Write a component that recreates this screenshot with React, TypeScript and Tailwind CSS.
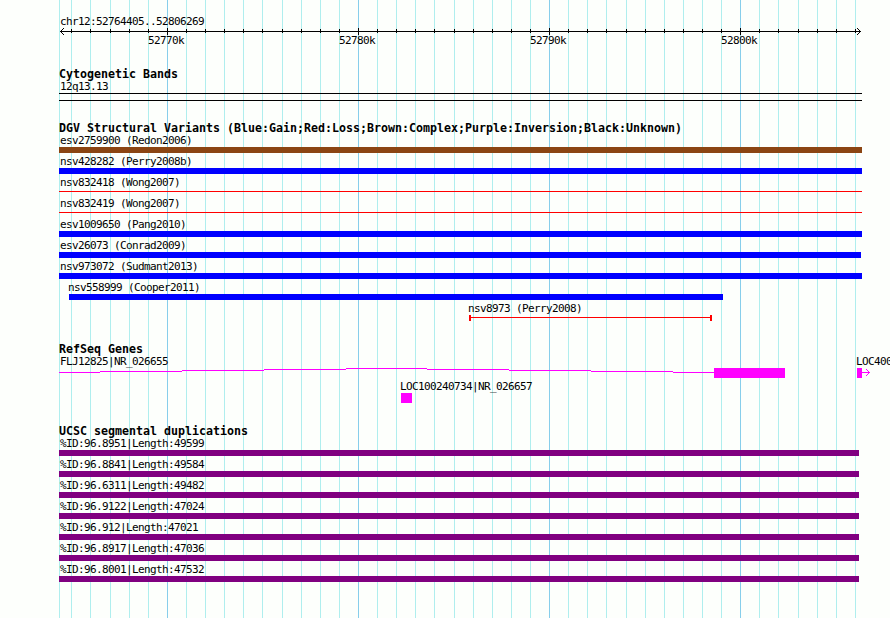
import type React from "react"

const GRID_LINES = [
  59, 71, 90, 110, 129, 148, 186, 205, 224, 243, 262, 282, 301, 320, 339, 377, 396, 415, 434, 454, 473, 492, 511, 530,
  568, 587, 606, 626, 645, 664, 683, 702, 721, 759, 778, 798, 817, 836, 855,
]
const MAJOR_LINES = [167, 358, 549, 740]

const variants = [
  { label: "esv2759900 (Redon2006)", start: 59, end: 862, color: "bg-[#8b4513]" },
  { label: "nsv428282 (Perry2008b)", start: 59, end: 862, color: "bg-[#0000ff]" },
  { label: "nsv832418 (Wong2007)", start: 59, end: 862, color: "bg-[#ff0000]", thin: true },
  { label: "nsv832419 (Wong2007)", start: 59, end: 862, color: "bg-[#ff0000]", thin: true },
  { label: "esv1009650 (Pang2010)", start: 59, end: 862, color: "bg-[#0000ff]" },
  { label: "esv26073 (Conrad2009)", start: 59, end: 861, color: "bg-[#0000ff]" },
  { label: "nsv973072 (Sudmant2013)", start: 59, end: 862, color: "bg-[#0000ff]" },
  { label: "nsv558999 (Cooper2011)", start: 69, end: 723, color: "bg-[#0000ff]" },
  { label: "nsv8973 (Perry2008)", start: 469, end: 712, color: "bg-[#ff0000]", thin: true, capped: true },
]

const duplications = [
  "%ID:96.8951|Length:49599",
  "%ID:96.8841|Length:49584",
  "%ID:96.6311|Length:49482",
  "%ID:96.9122|Length:47024",
  "%ID:96.912|Length:47021",
  "%ID:96.8917|Length:47036",
  "%ID:96.8001|Length:47532",
]

export default function App() {
  return (
    <div className="relative h-[618px] w-[890px] overflow-hidden bg-[#fdfffc] font-['DejaVu_Sans_Mono','Liberation_Mono',monospace] text-[11px] text-black">
      <Grid />
      <div className="relative flex flex-col pt-4">
        <Ruler />

        <Track title="Cytogenetic Bands" className="mt-[21px]">
          <Label x={60}>12q13.13</Label>
          <div className="ml-[59px] h-2 w-[803px] border-y border-black" />
        </Track>

        <Track title="DGV Structural Variants (Blue:Gain;Red:Loss;Brown:Complex;Purple:Inversion;Black:Unknown)" className="mt-[21px]">
          {variants.map((v) => (
            <Feature key={v.label} {...v} />
          ))}
        </Track>

        <Track title="RefSeq Genes" className="mt-[19px]">
          <div className="flex">
            <Label x={60}>FLJ12825|NR_026655</Label>
            <div className="ml-auto w-[34px]">
              <Label x={0}>LOC400</Label>
            </div>
          </div>
          <GeneModels />
          <Label x={400}>LOC100240734|NR_026657</Label>
          <div className="ml-[401px] h-2.5 w-[11px] bg-[#ff00ff]" />
        </Track>

        <Track title="UCSC segmental duplications" className="mt-[22px]">
          {duplications.map((label) => (
            <Feature key={label} label={label} start={59} end={859} color="bg-[#800080]" />
          ))}
        </Track>
      </div>
    </div>
  )
}

function Grid() {
  return (
    <svg className="absolute inset-0" width="890" height="618" shapeRendering="crispEdges">
      {GRID_LINES.map((x) => (
        <rect key={x} x={x} y="0" width="1" height="618" fill="#afeeee" />
      ))}
      {MAJOR_LINES.map((x) => (
        <rect key={x} x={x} y="0" width="1" height="618" fill="#87ceeb" />
      ))}
    </svg>
  )
}

function Ruler() {
  return (
    <div className="h-[31px]">
      <Label x={60}>chr12:52764405..52806269</Label>
      <svg className="block" width="890" height="7" shapeRendering="crispEdges">
        <rect x="60" y="3" width="801" height="1" />
        {GRID_LINES.slice(1).map((x) => (
          <rect key={x} x={x} y="1" width="1" height="4" />
        ))}
        {MAJOR_LINES.map((x) => (
          <rect key={x} x={x} y="0" width="1" height="7" />
        ))}
        <path d="M61 2h1v1h-1zM62 1h1v1h-1zM63 0h1v1h-1zM61 4h1v1h-1zM62 5h1v1h-1zM63 6h1v1h-1z" />
        <path d="M859 2h1v1h-1zM858 1h1v1h-1zM857 0h1v1h-1zM859 4h1v1h-1zM858 5h1v1h-1zM857 6h1v1h-1z" />
      </svg>
      <div className="ml-[148px] flex">
        {["52770k", "52780k", "52790k", "52800k"].map((tick) => (
          <div key={tick} className="w-[191px] shrink-0 last:w-10">
            <Label x={0}>{tick}</Label>
          </div>
        ))}
      </div>
    </div>
  )
}

function GeneModels() {
  return (
    <svg className="mb-[3px] block" width="890" height="10" fill="#ff00ff" shapeRendering="crispEdges">
      <path d="M59 4h41v1H59zM100 3h82v1h-82zM182 2h82v1h-82zM264 1h82v1h-82zM346 0h81v1h-81z" />
      <path d="M427 1h82v1h-82zM509 2h82v1h-82zM591 3h82v1h-82zM673 4h41v1h-41z" />
      <rect x="714" y="0" width="71" height="10" />
      <rect x="857" y="0" width="5" height="10" />
      <path d="M862 4h8v1h-8zM868 3h1v1h-1zM867 2h1v1h-1zM866 1h1v1h-1zM868 5h1v1h-1zM867 6h1v1h-1zM866 7h1v1h-1z" />
    </svg>
  )
}

interface TrackProps {
  title: string
  className: string
  children: React.ReactNode
}

function Track({ title, className, children }: TrackProps) {
  return (
    <section className={className}>
      <h2 className="ml-[59px] h-[13px] text-[11.63px] leading-[13px] font-bold whitespace-pre">{title}</h2>
      {children}
    </section>
  )
}

function Label({ x, children }: { x: number; children: React.ReactNode }) {
  return (
    <div className="h-3 leading-3 tracking-[-0.622px] whitespace-pre" style={{ marginLeft: x }}>
      {children}
    </div>
  )
}

interface FeatureProps {
  label: string
  start: number
  end: number
  color: string
  thin?: boolean
  capped?: boolean
}

function Feature({ label, start, end, color, thin, capped }: FeatureProps) {
  return (
    <div className="h-[21px]">
      <Label x={start === 59 ? 60 : start - 1}>{label}</Label>
      <div className="flex h-1.5" style={{ marginLeft: start, width: end - start }}>
        {capped && <div className={`w-0.5 ${color}`} />}
        <div className={`flex-1 ${thin ? "mt-0.5 h-px" : "h-1.5"} ${color}`} />
        {capped && <div className={`w-0.5 ${color}`} />}
      </div>
    </div>
  )
}
